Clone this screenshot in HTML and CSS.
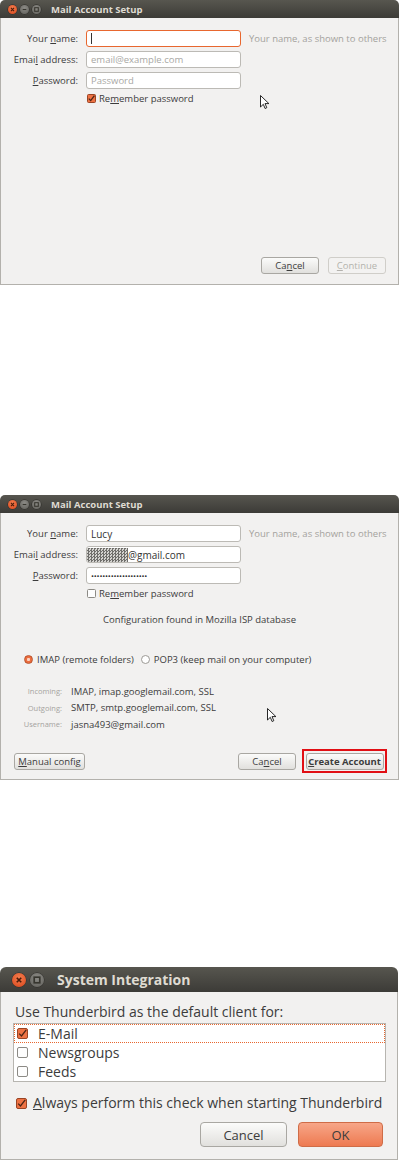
FILE: index.html
```html
<!DOCTYPE html>
<html lang="en">
<head>
    <meta charset="UTF-8" />
    <meta name="viewport" content="width=device-width, initial-scale=1" />
    <title>Thunderbird setup</title>
    <link rel="stylesheet" href="styles.css">
</head>
<body>

    <!-- first step: empty form -->
    <section class="window setup">
        <header class="titlebar">
            <span class="wm-buttons">
                <span class="wm close"><svg viewBox="0 0 10 10"><path d="M3.3 3.3 6.7 6.7M6.7 3.3 3.3 6.7" /></svg></span>
                <span class="wm"><svg viewBox="0 0 10 10"><path d="M3 5h4" /></svg></span>
                <span class="wm"><svg viewBox="0 0 10 10"><rect x="3" y="3" width="4" height="4" /></svg></span>
            </span>
            <h1>Mail Account Setup</h1>
        </header>
        <div class="win-body">
            <div class="fields">
                <label>Your <u>n</u>ame:</label>
                <div class="input focus"><span class="caret"></span></div>
                <span class="hint">Your name, as shown to others</span>

                <label>Emai<u>l</u> address:</label>
                <div class="input"><span class="placeholder">email@example.com</span></div>
                <span></span>

                <label><u>P</u>assword:</label>
                <div class="input"><span class="placeholder">Password</span></div>
                <span></span>

                <span></span>
                <div class="check-row">
                    <svg class="box" viewBox="0 0 9 9"><rect class="on" x="0.5" y="0.5" width="8" height="8" rx="1" /><path class="tick" d="M1.8 4.6 3.7 6.6 7.4 1.6" /></svg>
                    <span>Re<u>m</u>ember password</span>
                </div>
            </div>
            <div class="actions">
                <button class="btn">Ca<u>n</u>cel</button>
                <button class="btn" disabled><u>C</u>ontinue</button>
            </div>
        </div>
        <svg class="pointer p1" viewBox="0 0 9 14"><path d="M0.5 0.5v11.5l2.8-2.7 1.8 4.2 1.7-.8-1.8-4.1h3.9z" /></svg>
    </section>

    <!-- second step: configuration found -->
    <section class="window setup second">
        <header class="titlebar">
            <span class="wm-buttons">
                <span class="wm close"><svg viewBox="0 0 10 10"><path d="M3.3 3.3 6.7 6.7M6.7 3.3 3.3 6.7" /></svg></span>
                <span class="wm"><svg viewBox="0 0 10 10"><path d="M3 5h4" /></svg></span>
                <span class="wm"><svg viewBox="0 0 10 10"><rect x="3" y="3" width="4" height="4" /></svg></span>
            </span>
            <h1>Mail Account Setup</h1>
        </header>
        <div class="win-body">
            <div class="fields">
                <label>Your <u>n</u>ame:</label>
                <div class="input"><span class="value">Lucy</span></div>
                <span class="hint">Your name, as shown to others</span>

                <label>Emai<u>l</u> address:</label>
                <div class="input"><span class="blur"></span><span class="value">@gmail.com</span></div>
                <span></span>

                <label><u>P</u>assword:</label>
                <div class="input"><span class="dots">&bull;&bull;&bull;&bull;&bull;&bull;&bull;&bull;&bull;&bull;&bull;&bull;&bull;&bull;&bull;&bull;&bull;&bull;&bull;&bull;</span></div>
                <span></span>

                <span></span>
                <div class="check-row">
                    <svg class="box" viewBox="0 0 9 9"><rect class="off" x="0.5" y="0.5" width="8" height="8" rx="1" /></svg>
                    <span>Re<u>m</u>ember password</span>
                </div>
            </div>

            <p class="found">Configuration found in Mozilla ISP database</p>

            <div class="protocols">
                <span class="radio checked"></span><span>IMAP (remote folders)</span>
                <span class="radio"></span><span>POP3 (keep mail on your computer)</span>
            </div>

            <div class="servers">
                <span class="key">Incoming:</span><span>IMAP, imap.googlemail.com, SSL</span>
                <span class="key">Outgoing:</span><span>SMTP, smtp.googlemail.com, SSL</span>
                <span class="key">Username:</span><span>jasna493@gmail.com</span>
            </div>

            <div class="actions">
                <button class="btn manual"><u>M</u>anual config</button>
                <button class="btn">Ca<u>n</u>cel</button>
                <span class="highlight"><button class="btn strong"><u>C</u>reate Account</button></span>
            </div>
        </div>
        <svg class="pointer p2" viewBox="0 0 9 14"><path d="M0.5 0.5v11.5l2.8-2.7 1.8 4.2 1.7-.8-1.8-4.1h3.9z" /></svg>
    </section>

    <!-- default client dialog -->
    <section class="window integration">
        <header class="titlebar">
            <span class="wm-buttons">
                <span class="wm close"><svg viewBox="0 0 10 10"><path d="M3.4 3.4 6.6 6.6M6.6 3.4 3.4 6.6" /></svg></span>
                <span class="wm"><svg viewBox="0 0 10 10"><rect x="3" y="3" width="4" height="4" /></svg></span>
            </span>
            <h1>System Integration</h1>
        </header>
        <div class="win-body">
            <p class="prompt">Use Thunderbird as the default client for:</p>
            <ul class="clients">
                <li class="current">
                    <svg class="box" viewBox="0 0 11 11"><rect class="on" x="0.5" y="0.5" width="10" height="10" rx="1.5" /><path class="tick" d="M2.2 5.6 4.5 8 9.2 1.8" /></svg>
                    E-Mail
                </li>
                <li>
                    <svg class="box" viewBox="0 0 11 11"><rect class="off" x="0.5" y="0.5" width="10" height="10" rx="1.5" /></svg>
                    Newsgroups
                </li>
                <li>
                    <svg class="box" viewBox="0 0 11 11"><rect class="off" x="0.5" y="0.5" width="10" height="10" rx="1.5" /></svg>
                    Feeds
                </li>
            </ul>
            <div class="always">
                <svg class="box" viewBox="0 0 11 11"><rect class="on" x="0.5" y="0.5" width="10" height="10" rx="1.5" /><path class="tick" d="M2.2 5.6 4.5 8 9.2 1.8" /></svg>
                <span><u>A</u>lways perform this check when starting Thunderbird</span>
            </div>
            <div class="actions">
                <button class="btn big">Cancel</button>
                <button class="btn big ok">OK</button>
            </div>
        </div>
    </section>

</body>
</html>
```

FILE: styles.css
```css
body {
    margin: 0;
    background-color: #fff;
    font-family: 'Open Sans', 'DejaVu Sans', sans-serif;
    color: #3c3c3c;
}

u {
    text-decoration-thickness: 1px;
    text-underline-offset: 1px;
}

.window {
    position: relative;
    display: flex;
    flex-direction: column;
    width: 399px;
    height: 285px;
}

.window.second {
    margin-top: 210px;
}

.window.integration {
    width: 398px;
    height: 193px;
    margin-top: 187px;
}

/* title bar */

.titlebar {
    display: flex;
    align-items: center;
    height: 18px;
    flex-shrink: 0;
    border-radius: 5px 5px 0 0;
    background: linear-gradient(#57564f, #3c3b37);
}

.titlebar h1 {
    margin: 0 0 0 10px;
    font-size: 9.5px;
    font-weight: 700;
    color: #dfdbd2;
}

.wm-buttons {
    display: flex;
    gap: 3px;
    margin-left: 8px;
}

.wm {
    display: flex;
    width: 9px;
    height: 9px;
    border-radius: 50%;
    background: radial-gradient(circle at 50% 35%, #8d8c87, #5f5e59);
    box-shadow: 0 0 0 0.5px #2e2d2a;
}

.wm svg {
    width: 100%;
    height: 100%;
    fill: none;
    stroke: #37362f;
    stroke-width: 1.2;
}

.wm.close {
    background: radial-gradient(circle at 50% 35%, #f57f4f, #d8441a);
}

.wm.close svg {
    stroke: #4a1b0a;
}

.integration .titlebar {
    height: 25px;
    border-radius: 6px 6px 0 0;
}

.integration .titlebar h1 {
    margin-left: 13px;
    font-size: 14px;
}

.integration .wm-buttons {
    gap: 4px;
    margin-left: 12px;
}

.integration .wm {
    width: 14px;
    height: 14px;
}

/* body */

.win-body {
    flex: 1;
    display: flex;
    flex-direction: column;
    background-color: #f2f1f0;
    border: 1px solid #b3b1ac;
    border-top: none;
    font-size: 9.5px;
}

.fields {
    display: grid;
    grid-template-columns: 77px 155px 1fr;
    grid-template-rows: repeat(3, 17px) 11px;
    column-gap: 8px;
    row-gap: 4px;
    padding-top: 12px;
}

.fields label {
    align-self: center;
    text-align: right;
    white-space: nowrap;
}

.input {
    display: flex;
    align-items: center;
    padding: 0 4px;
    background-color: #fff;
    border: 1px solid #bcbab5;
    border-radius: 3px;
    overflow: hidden;
}

.input.focus {
    border-color: #e8672f;
}

.caret {
    width: 1px;
    height: 11px;
    background-color: #333;
}

.placeholder {
    color: #a9a8a4;
}

.value {
    font-size: 10px;
    color: #333;
}

.blur {
    width: 41px;
    height: 14px;
    margin-left: -4px;
    background: repeating-conic-gradient(#5f5e5b 0 25%, #cfcecb 0 50%) 0 0 / 3px 3px;
    opacity: 0.9;
}

.dots {
    font-size: 8px;
    letter-spacing: -0.2px;
    color: #333;
}

.hint {
    align-self: center;
    color: #a4a29d;
    white-space: nowrap;
}

.check-row {
    display: flex;
    align-items: center;
    gap: 3px;
    margin-left: 1px;
    white-space: nowrap;
}

.box {
    flex-shrink: 0;
    width: 9px;
    height: 9px;
}

.box .on {
    fill: #ee7243;
    stroke: #9a4424;
}

.box .off {
    fill: #fdfdfd;
    stroke: #8c8a85;
}

.box .tick {
    fill: none;
    stroke: #4b2415;
    stroke-width: 1.3;
}

.found {
    margin: 14px 0 0 0;
    text-align: center;
}

.protocols {
    display: flex;
    align-items: center;
    margin-top: 27px;
    padding-left: 23px;
    white-space: nowrap;
}

.radio {
    width: 7px;
    height: 7px;
    margin-right: 4px;
    border: 1px solid #9c9a95;
    border-radius: 50%;
    background-color: #fff;
}

.radio.checked {
    border-color: #b9532c;
    background: radial-gradient(circle, #fbd3c1 0 1.3px, #ec6d3e 1.8px);
}

.protocols .radio + span {
    margin-right: 7px;
}

.servers {
    display: grid;
    grid-template-columns: 61px 1fr;
    grid-auto-rows: 16.5px;
    column-gap: 9px;
    align-items: center;
    margin-top: 17px;
}

.servers .key {
    text-align: right;
    font-size: 7.5px;
    color: #a5a39f;
}

/* buttons */

.actions {
    display: flex;
    align-items: center;
    justify-content: flex-end;
    gap: 9px;
    margin-top: auto;
    padding: 0 12px 10px 13px;
}

.btn {
    width: 58px;
    height: 17px;
    padding: 0;
    font-family: inherit;
    font-size: 9.5px;
    color: #3c3c3c;
    background: linear-gradient(#fbfbfa, #e1e0dd);
    border: 1px solid #a9a7a2;
    border-radius: 3px;
    white-space: nowrap;
}

.btn:disabled {
    color: #b4b2ad;
    background: #f3f2f1;
    border-color: #d0cec9;
}

.btn.manual {
    width: 71px;
    margin-right: auto;
}

.second .actions {
    gap: 6px;
    padding: 0 11px 6px 13px;
}

.highlight {
    display: flex;
    align-items: center;
    justify-content: center;
    width: 81px;
    height: 20px;
    border: 2px solid #e10f14;
}

.btn.strong {
    width: 78px;
    font-weight: 700;
}

.pointer {
    position: absolute;
    width: 9px;
    height: 14px;
    fill: #fff;
    stroke: #111;
    stroke-width: 0.9;
}

.pointer.p1 {
    left: 260px;
    top: 95px;
}

.pointer.p2 {
    left: 267px;
    top: 213px;
}

/* system integration */

.integration .win-body {
    font-size: 14px;
}

.prompt {
    margin: 0;
    padding: 11px 0 0 14px;
    line-height: 17px;
}

.clients {
    list-style: none;
    margin: 3px 0 0 12px;
    padding: 0;
    width: 371px;
    background-color: #fff;
    border: 1px solid #b7b5b0;
}

.clients li {
    display: flex;
    align-items: center;
    gap: 10px;
    height: 19px;
    padding-left: 2px;
    box-sizing: border-box;
    border: 1px solid transparent;
}

.clients li.current {
    border: 1px dotted #e8672f;
}

.integration .box {
    width: 11px;
    height: 11px;
}

.always {
    display: flex;
    align-items: center;
    gap: 6px;
    margin-top: 12px;
    padding-left: 15px;
    line-height: 18px;
    white-space: nowrap;
}

.integration .actions {
    gap: 11px;
    margin-top: 10px;
    padding: 0 14px 11px 13px;
}

.btn.big {
    width: 87px;
    height: 25px;
    font-size: 13px;
    border-radius: 4px;
}

.btn.ok {
    width: 85px;
    background: linear-gradient(#f7a688, #ee7a51);
    border-color: #cf6c47;
}
```
